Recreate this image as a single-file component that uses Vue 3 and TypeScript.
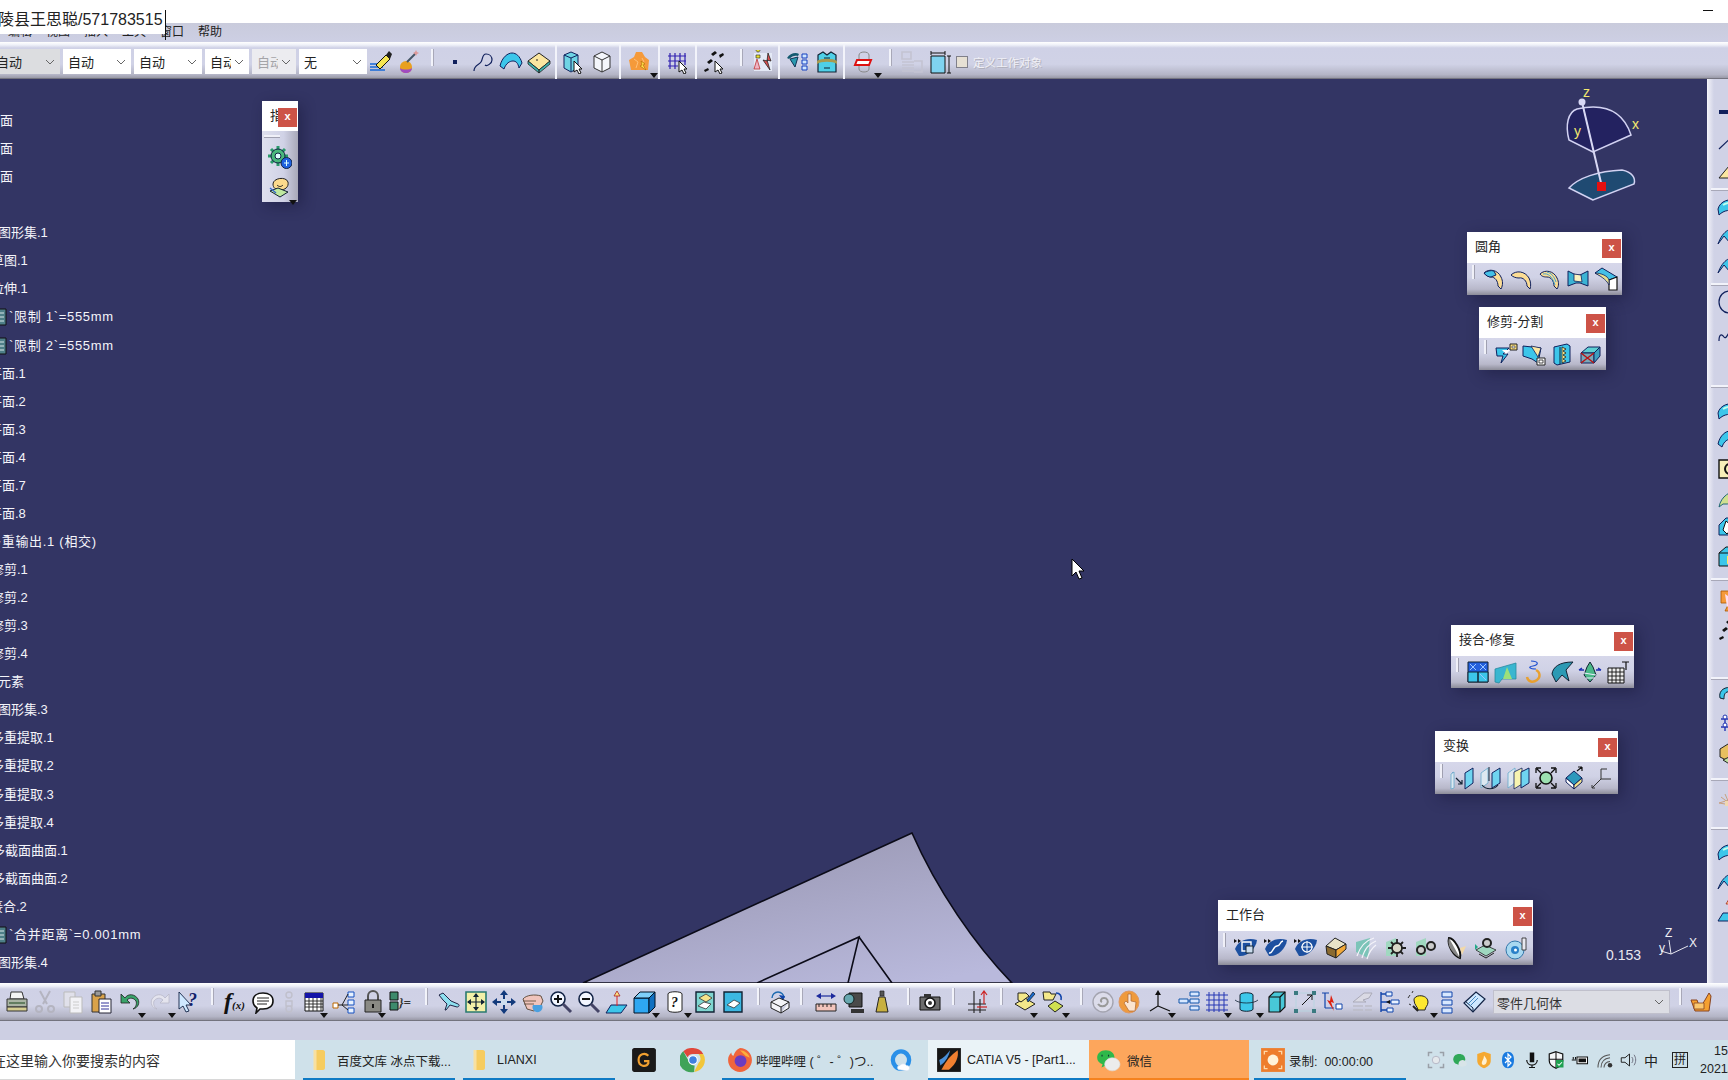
<template>
  <div class="page">
    <div class="titlebar">
      <span class="minimize"></span>
    </div>
    <div class="menu">
      <span v-for="m in menus" :key="m">{{ m }}</span>
    </div>
    <div class="toolbar top-tools">
      <div v-for="(c, i) in combos" :key="i" class="combo" :class="c.cls">
        <span class="combo-text">{{ c.text }}</span>
        <svg class="chev" width="10" height="6" viewBox="0 0 10 6"><path d="M1 1l4 4 4-4" fill="none" stroke="#666" /></svg>
      </div>
      <template v-for="(t, i) in topTools" :key="i">
        <div v-if="t.sep" class="sep" :class="{ tall: t.tall }" :style="{ width: t.sep + 'px' }"></div>
        <div v-else class="tool" :style="{ width: t.w + 'px' }">
          <Ico :n="t.n" />
          <i v-if="t.arrow" class="arrow"></i>
        </div>
      </template>
      <span class="check"></span>
      <span class="disabled-label">定义工作对象</span>
    </div>

    <div class="main">
      <div class="viewport">
        <svg class="scene" width="1707" height="904" viewBox="0 79 1707 904">
          <defs>
            <linearGradient id="partFill" x1="0.2" y1="0" x2="0.8" y2="1">
              <stop offset="0" stop-color="#9795b0" />
              <stop offset="1" stop-color="#b9b9dc" />
            </linearGradient>
          </defs>
          <path d="M912 833L583 983H1012C975 945 937 890 912 833z" fill="url(#partFill)" stroke="#0b0b18" stroke-width="1.6" />
          <path d="M757 983L859 937L848 983M859 937L892 983" fill="none" stroke="#0b0b18" stroke-width="1.6" />
          <!-- compass -->
          <path d="M1593 152L1569 140C1565 125 1568 112 1577 109C1600 104 1622 108 1631 135z" fill="#232260" stroke="#d2d2f2" stroke-width="1.5" />
          <path d="M1593 200L1569 188C1578 178 1598 171 1622 170C1632 172 1636 178 1634 184z" fill="#1f4a72" stroke="#d2d2f2" stroke-width="1.5" />
          <path d="M1582 102L1602 187" stroke="#d8d8f4" stroke-width="2" />
          <circle cx="1582" cy="102" r="3.5" fill="#d8d8f4" />
          <rect x="1597" y="182" width="9" height="9" fill="#e51010" />
          <text x="1583" y="97" class="axis-label">z</text>
          <text x="1632" y="129" class="axis-label">x</text>
          <text x="1574" y="136" class="axis-label">y</text>
          <!-- small axis -->
          <path d="M1671 954L1669 940M1671 954L1661 951M1671 954L1688 946" fill="none" stroke="#e8e8f0" stroke-width="1" />
          <text x="1665" y="937" class="mini-axis">Z</text>
          <text x="1689" y="947" class="mini-axis">X</text>
          <text x="1659" y="952" class="mini-axis">y</text>
          <text x="1606" y="960" class="scale">0.153</text>
          <!-- cursor -->
          <path d="M1072 559V576L1076 572L1079 579L1082 578L1079 571H1084z" fill="#fff" stroke="#000" stroke-width="1" />
        </svg>

        <div class="tree">
          <div v-for="(r, i) in treeRows" :key="i" class="row" :class="{ spaced: r.icon || r.wide }" :style="{ marginLeft: r.x + 'px' }">
            <svg v-if="r.icon" class="param" width="11" height="20" viewBox="0 0 11 20">
              <path d="M1 2h9v16H1z" fill="#4e7f88" stroke="#111" />
              <path d="M3 6h5M3 10h5M3 14h5" stroke="#d8e8e8" />
            </svg>
            {{ r.text }}
          </div>
        </div>

        <div class="palette narrow">
          <div class="pal-title"><span>指</span><b class="close">x</b></div>
          <div class="pal-col">
            <span class="grip-h"></span>
            <div class="tool"><Ico n="gearblue" /></div>
            <div class="tool"><Ico n="sketchface" /><i class="arrow"></i></div>
          </div>
        </div>

        <div
          v-for="p in palettes"
          :key="p.title"
          class="palette"
          :style="{ left: p.x + 'px', top: p.y + 'px', width: p.w + 'px' }"
        >
          <div class="pal-title"><span>{{ p.title }}</span><b class="close">x</b></div>
          <div class="pal-body" :class="{ wide: p.wide }">
            <span class="grip"></span>
            <div v-for="n in p.icons" :key="n" class="tool"><Ico :n="n" /></div>
          </div>
        </div>
      </div>

      <div class="rightbar">
        <template v-for="(r, i) in rightTools" :key="i">
          <div v-if="r.sep" class="rsep" :style="{ height: r.sep + 'px' }"></div>
          <div v-else class="rtool"><Ico v-if="r.n" :n="r.n" /></div>
        </template>
      </div>
    </div>

    <div class="toolbar bottom-tools">
      <template v-for="(t, i) in bottomTools" :key="i">
        <div v-if="t.sep" class="sep" :style="{ width: t.sep + 'px' }"></div>
        <div v-else class="tool" :style="{ width: t.w + 'px' }">
          <Ico :n="t.n" />
          <i v-if="t.arrow" class="arrow"></i>
        </div>
      </template>
      <div class="combo body-combo">
        <span class="combo-text">零件几何体</span>
        <svg class="chev" width="10" height="6" viewBox="0 0 10 6"><path d="M1 1l4 4 4-4" fill="none" stroke="#666" /></svg>
      </div>
      <div class="sep" style="width: 20px"></div>
      <div class="tool" style="width: 22px"><Ico n="hammer" /></div>
    </div>
    <div class="strip"></div>

    <div class="taskbar">
      <div class="search">在这里输入你要搜索的内容</div>
      <div class="task open first"><Ico n="folder" /><span>百度文库 冰点下载...</span></div>
      <div class="task open narrow-gap"><Ico n="folder" /><span>LIANXI</span></div>
      <div class="slot lead"><Ico n="gapp" :s="26" /></div>
      <div class="slot"><Ico n="chrome" :s="26" /></div>
      <div class="task open ff"><Ico n="firefox" :s="26" /><span>哔哩哔哩 ( ゜- ゜)つ...</span></div>
      <div class="slot"><Ico n="qqb" :s="26" /></div>
      <div class="task open catia"><Ico n="catia" :s="26" /><span>CATIA V5 - [Part1...</span></div>
      <div class="task wechat"><Ico n="wechat" :s="26" /><span>微信</span></div>
      <div class="task open rec"><Ico n="rec" :s="26" /><span>录制: &nbsp;00:00:00</span></div>
      <div class="tray">
        <div v-for="n in trayIcons" :key="n" class="tray-slot"><Ico :n="n" :s="18" /></div>
        <span class="ime">中</span>
        <span class="ime-box">拼</span>
        <div class="clock"><span>15:24</span><span>2021/8/9</span></div>
      </div>
    </div>

    <div class="note">
      <span>陵县王思聪/571783515</span>
      <i class="caret"></i>
    </div>
  </div>
</template>

<script setup lang="ts">
import { h } from 'vue'

type Shape = { d?: string; t?: string; x?: number; y?: number; s?: number; f: string; k?: string; w?: number }
type Tool = { n?: string; w?: number; arrow?: boolean; sep?: number; tall?: boolean }

const p = (d: string, f: string, k?: string, w?: number): Shape => ({ d, f, k, w })
const t = (text: string, x: number, y: number, s: number, f: string): Shape => ({ t: text, x, y, s, f })

const CUR = [p('M13 11v11l3-2 2 4 2-1-2-4h3z', '#fff', '#111', 1)]
const CY = '#3cc6ea'
const YE = '#fbe6a0'
const NV = '#10205c'

const icons: Record<string, Shape[]> = {
  brush: [p('M1 14h11M1 17h13M1 20h15', 'none', '#1668d8', 1.4), p('M7 15L17 5l4 4-10 10z', '#f5e553', '#111', 1), p('M17 5l3-4 3 3-2 5z', '#222')],
  ball: [p('M3 17a6 6 0 0 1 12 0c0 4-3 6-6 6s-6-2-6-6z', '#e8a020'), p('M3 18c2 2 10 2 12 0 0 3-3 5-6 5s-6-2-6-5z', '#a04cc0'), p('M10 12L19 3', 'none', '#456', 2), p('M19 0l1 2 2 1-2 1-1 2-1-2-2-1 2-1z', '#d99')],
  point: [p('M10 10h4v4h-4z', NV)],
  curve: [p('M3 21c0-6 5-6 7-9s1-8 5-8 6 3 6 6-5 7-7 5', 'none', NV, 1.2)],
  surf: [p('M1 16C3 7 9 3 13 3s8 3 10 10l-3 5c-1-5-3-7-6-7s-7 2-9 8z', CY, NV, 1)],
  dia: [p('M1 11l11-8 11 8-11 9z', YE, '#222', 1), p('M1 11l11 9v3L1 14zM23 11l-11 9v3l11-9z', '#3eb5b0', '#222', .8), p('M9 10h2', 'none', '#222')],
  sel1: [p('M3 5l7-3 7 3v13l-7 4-7-4z', '#6fd4e4', NV, 1), p('M10 8v13M3 5l7 3 7-3', 'none', NV), ...CUR],
  sel2: [p('M4 6l8-4 8 4v12l-8 4-8-4z', '#f4f6fb', '#333', 1), p('M12 10v12M4 6l8 4 8-4', 'none', '#333')],
  orange: [p('M8 2h6l3 5 4 3-1 10H3L1 10l5-3z', '#f59a3a'), p('M6 9l4 3-2 6M14 8l2 4', 'none', '#ffc078'), p('M13 11l4 3-2 1 3 5-6-4 2-1z', '#ffe14d', '#a60', .6)],
  gridsel: [p('M4 3v16M9 3v16M14 3v16M19 3v12M2 6h18M2 11h18M2 16h10', 'none', '#3020b0', 1.2), ...CUR],
  pts: [p('M9 4l4-3 2 2-4 3zM17 5l4-2 1 2-4 3zM5 12l4-3 2 2-4 3zM2 20l4-2 1 2-4 2z', '#111'), ...CUR],
  pair: [p('M3 3h18v18H3z', '#e4e9f6'), p('M7 2a2 2 0 1 1 .1 0zM5 5h4v3H5z', '#e8e030', '#222', .6), p('M6 9l3 10-6 0z', '#f0b4c4', '#b33', .8), p('M17 3l3 8-4-1 3 10-7-10 4 1z', '#e05050', '#222', .8)],
  eyetree: [p('M1 8c3-5 9-6 12-4l-1 2c-3-1-6 0-9 3z', '#145a70'), p('M4 9l8-2-3 10z', '#2a9ab0', '#135', 1), p('M16 4h5v4h-5zM16 10h5v4h-5zM16 16h5v4h-5z', '#cfe6ff', '#1540c0', 1)],
  wave: [p('M3 5l5-3 4 3 4-3 5 3v17H3z', '#4fd0e8', '#123', 1.2), p('M2 11c4-3 16-3 20 0v3c-4-3-16-3-20 0z', '#a89a50'), p('M9 8h6M9 18h6', 'none', '#123')],
  plane3: [p('M7 5c0-4 10-4 10 0v14c0 4-10 4-10 0z', 'none', '#888', 1), p('M5 10h14l-2 5H3z', '#fff', '#d11', 2)],
  gridbar: [p('M2 2h9v7H2zM2 12h12M2 15h12M2 18h12M2 21h12M14 11h8v11h-8', 'none', '#c4c4d2', 1.6)],
  boxdim: [p('M3 6h14v17H3z', '#7fd3f0', '#111', 1), p('M3 1v4M17 1v4M3 3h14', 'none', '#111'), p('M21 6v17M19 6h4M19 23h4', 'none', '#111')],

  print: [p('M6 2h11l2 7H5z', '#f4f4f4', '#333', 1), p('M2 9h20v8H2z', '#aab4a4', '#333', 1), p('M2 17h20v4H2z', '#d4cc90', '#333', 1), p('M4 13h16', 'none', '#464', 1.4)],
  cut: [p('M7 1l7 13M17 1L10 14', 'none', '#b4b4c0', 2), p('M3 19a3 3 0 1 0 6 0 3 3 0 1 0-6 0zM15 19a3 3 0 1 0 6 0 3 3 0 1 0-6 0z', 'none', '#b4b4c0', 2)],
  copy: [p('M3 2h11v15H3z', '#e0e0ea', '#bbb', 1), p('M9 7h12v16H9z', '#f2f2f6', '#bbb', 1), p('M12 12h6M12 15h6M12 18h6', 'none', '#ccc')],
  paste: [p('M3 4h13v18H3z', '#d9a24a', '#333', 1), p('M6 1h6v5H6z', '#999', '#333', 1), p('M10 9h12v14H10z', '#fff', '#223', 1), p('M12 13h8M12 16h8M12 19h8', 'none', '#339')],
  undo: [p('M3 4v9h9l-3-3c3-3 7-2 9 1 1 3 0 6-3 8 5-1 7-6 5-10-3-5-10-6-13-1z', '#3aa36a', '#222', .8)],
  redo: [p('M21 4v9h-9l3-3c-3-3-7-2-9 1-1 3 0 6 3 8-5-1-7-6-5-10 3-5 10-6 13-1z', '#e4e4ee', '#b8b8c8', .8)],
  what: [p('M2 2v17l4-3 3 6 3-1-3-6h5z', '#cfe8ff', '#124', .9), t('?', 11, 16, 18, '#11206a')],
  fx: [t('f', 1, 19, 24, '#111'), t('(x)', 9, 19, 11, '#111')],
  bubble: [p('M12 3c6 0 10 3 10 8s-4 8-10 8h-3l-4 4 1-5c-3-2-4-4-4-7 0-5 4-8 10-8z', '#fff', '#111', 1.6), p('M6 8h12M6 11h12M6 14h10', 'none', '#222', 1)],
  fig: [p('M9 5a3 3 0 1 1 6 0 3 3 0 1 1-6 0zM9 11h6v5H9zM9 19a3 3 0 1 1 6 0 3 3 0 1 1-6 0z', 'none', '#c0c0cc', 1.4)],
  table: [p('M3 3h18v18H3z', '#fff', '#111', 1), p('M3 3h18v5H3z', '#1414a8'), p('M3 11h18M3 14h18M3 17h18M7 8v13M11 8v13M15 8v13M19 8v13', 'none', '#222', .9)],
  tree: [p('M1 13h5v5H1z', '#fff', '#b60', 1), p('M16 2h6v5h-6zM16 10h6v5h-6zM16 18h6v5h-6z', '#e8f2ff', '#1550c0', 1), p('M6 15h4M10 15l6-11M10 15h6M10 15l6 5', 'none', '#222', 1)],
  lock: [p('M7 10V6a5 5 0 0 1 10 0v4', 'none', '#555', 2), p('M4 10h16v12H4z', '#8a8a84', '#222', 1), p('M12 14v4', 'none', '#111', 2)],
  formula: [p('M2 2h8v8H2zM2 12h8v8H2z', '#3d8a6c', '#111', 1), t('}=', 11, 17, 13, '#333')],
  airplane: [p('M2 5l4-2 8 8 7 3c2 1 1 3-1 3l-7-2-4 5H8l2-6-4-4z', '#8fe0f0', '#113', .9)],
  fit: [p('M2 2h20v20H2z', '#f3f0a8', '#2a7a70', 1.6), p('M12 4v16M4 12h16', 'none', '#123', 1.2), p('M12 3l-3 4h6zM12 21l-3-4h6zM3 12l4-3v6zM21 12l-4-3v6z', '#123')],
  pan: [p('M12 3v18M3 12h18', 'none', '#123a7c', 2), p('M12 0l-4 5h8zM12 24l-4-5h8zM0 12l5-4v8zM24 12l-5-4v8z', '#123a7c'), p('M9 9h6v6H9z', '#cde')],
  rot: [p('M2 9c3-4 12-5 18-3l2 5-3 6-6 4-7-2z', '#f0c4bc', '#543', .9), p('M2 11h13M3 14h10', 'none', '#543', .8), p('M12 15a5 5 0 1 0 9 0z', '#4aa0e0')],
  zin: [p('M2 9a7 7 0 1 0 14 0 7 7 0 1 0-14 0z', '#f2f6ff', '#124', 1.6), p('M14 14l8 8', 'none', '#446', 3), p('M5 9h8M9 5v8', 'none', '#111', 2)],
  zout: [p('M2 9a7 7 0 1 0 14 0 7 7 0 1 0-14 0z', '#f2f6ff', '#124', 1.6), p('M14 14l8 8', 'none', '#446', 3), p('M5 9h8', 'none', '#111', 2)],
  normal: [p('M6 15h16l-6 8H1z', CY, NV, 1), p('M12 16V4', 'none', '#d22', 1), p('M12 1l-3 5h6z', '#fbe080', '#a22', .8)],
  cube: [p('M2 8h15v15H2z', '#2ea7f2', '#012', 1), p('M2 8l6-6h15l-6 6z', '#7fd0fa', '#012', 1), p('M17 8l6-6v15l-6 6z', '#1070c0', '#012', 1)],
  qcan: [p('M5 4c0-3 14-3 14 0v16c0 3-14 3-14 0z', '#fff', '#222', 1), t('?', 8, 17, 14, '#111')],
  bookA: [p('M3 2h18v20H3z', '#7fd6d0', '#123', 1.4), p('M6 8l7-4 6 4-6 4z', '#f5e48a', '#333', .8), p('M5 16l6-4 7 2-5 5z', '#fff', '#333', .8)],
  bookB: [p('M3 2h18v20H3z', '#3cb8e2', '#123', 1.4), p('M6 15l7-5 6 3-6 5z', '#fff', '#333', .8)],
  hand2: [p('M4 8a6 6 0 0 1 12 0', 'none', '#1c6ab0', 1.4), p('M11 5l6 1-2 5z', '#14a'), p('M3 12l8-4 10 4-8 5zM3 12v6l10 5v-6M21 12v6l-8 5', '#f4f4f8', '#222', 1)],
  ruler: [p('M2 14h20v7H2z', '#f2c4bc', '#222', 1), p('M5 14v3M9 14v3M13 14v3M17 14v3', 'none', '#222'), p('M5 6h14', 'none', '#1c2a9c', 1.2), p('M2 6l5-3v6zM22 6l-5-3v6z', '#1c2a9c')],
  inertia: [p('M7 3h13v14H7z', '#4a4a4a', '#111', 1), p('M2 9a5 5 0 1 0 10 0 5 5 0 1 0-10 0z', '#68a8b0', '#122', 1), p('M9 19h13v4H9z', '#333')],
  weight: [p('M9 7h6l3 15H6z', '#c8b040', '#222', 1), p('M10 1h4v5h-4z', '#555', '#222', .7)],
  camera: [p('M2 7h20v13H2z', '#6c6c6c', '#111', 1), p('M6 4h7v3H6z', '#333'), p('M7 13a5 5 0 1 0 10 0 5 5 0 1 0-10 0z', '#fff', '#111', 1.6), p('M10 13a2 2 0 1 0 4 0 2 2 0 1 0-4 0z', '#333')],
  hdim: [p('M9 1v22M15 9v14M3 14h18M3 20h18', 'none', '#222', 1.1), p('M19 2v12M16 5l3-4 3 4', 'none', '#c22', 1.2), p('M12 17h10', 'none', '#c22', 1.2)],
  fedit: [p('M2 14l10-6 10 6-10 6z', '#f4e88a', '#222', 1), p('M5 3h8l3 3-8 6-3-2z', '#f4e88a', '#222', 1), p('M14 10l6-8 2 2-7 8z', '#1a6acc', '#123', .8)],
  fswap: [p('M2 2h7l1 2h5l-3 6H3z', '#f4e88a', '#222', 1), p('M7 16l7-5 8 5-8 6z', '#d0e050', '#222', 1), p('M15 3c4 0 6 3 5 7', 'none', '#14a', 1.6)],
  spiral: [p('M2 12a10 10 0 1 0 20 0 10 10 0 1 0-20 0z', '#dcdcea', '#a4a4b0', 1.4), p('M7 14c2 3 7 3 9 0s0-6-3-6-4 3-2 4', 'none', '#999', 2)],
  handorange: [p('M2 12a10 11 0 1 0 20 0 10 11 0 1 0-20 0z', '#ef9a3c', '#d96', 1), p('M11 4v9l-2-2-2 2 5 8h6l1-9-5-1V4z', '#fbe4cf', '#a63', .7)],
  axes: [p('M10 3v13L2 21M10 16l12 5', 'none', '#111', 1.2), p('M10 0l-3 5h6z', '#111')],
  spec: [p('M13 2h9v4h-9zM2 9h9v4H2zM13 9h9v4h-9zM13 16h9v4h-9z', '#d8e8ff', '#15a', 1), p('M11 11h2', 'none', '#15a')],
  grid2: [p('M4 2v20M9 2v20M14 2v20M19 2v20M1 5h22M1 10h22M1 15h22M1 20h22', 'none', '#2536b4', 1)],
  prism: [p('M5 5c0-3 13-3 13 0v14c0 3-13 3-13 0z', '#3dc8ea', '#123', 1), p('M0 10c4 4 19 4 23 0', 'none', '#123', .8)],
  box3: [p('M4 7l5-5h11v15l-5 5H4z', '#48c8d8', '#111', 1.2), p('M4 7h11v15M15 7l5-5', 'none', '#111', 1.2)],
  bbox: [p('M3 3h18v18H3z', 'none', '#b8d4e0', 1), p('M1 1h4v4H1zM19 19h4v4h-4zM1 19h4v4H1zM19 1h4v4h-4z', '#3a7a80'), p('M9 15L19 5M14 5h5v5', 'none', '#111', 1)],
  nobolt: [p('M2 3h7M5 3v15M5 18h9', 'none', '#14a', 1.2), p('M16 14h6v5h-6z', '#fff', '#14a', 1), p('M11 5l3 8-3-1 3 9-7-11 3 1z', '#d21')],
  handgrey: [p('M3 12L14 3h8l-3 5-6 2 3 2H4z', '#dadae4', '#aaaab8', 1), p('M3 16h10M3 20h10M15 16h7M15 20h7', 'none', '#bcbcc8', 1.6)],
  treec: [p('M3 2v20M3 4h5M3 12h10M3 20h6', 'none', '#14a', 1.4), p('M8 2h6v4H8zM13 10h8v4h-8zM9 18h6v4H9z', '#e8f2ff', '#14a', 1), p('M8 12l4-2v4z', '#111')],
  bulb: [p('M7 10c0-6 14-6 14 2 0 4-3 5-3 8h-7c0-3-4-5-4-10z', '#fde830', '#222', 1), p('M1 8l2-3M5 3l1-2M2 14l2 1', 'none', '#333'), p('M6 16l5 5', 'none', '#222', 2)],
  stack: [p('M7 2h10v5H7zM7 10h10v5H7zM7 18h10v5H7z', '#d8e8ff', '#14a', 1)],
  solid: [p('M2 13L14 2l9 7-12 13z', '#cfe8ff', '#124', 1.2), p('M2 13l9 9v-4l-8-7', 'none', '#124', 1), p('M6 14l8-8M8 16l8-8', 'none', '#4a8ac0')],
  hammer: [p('M2 10h6l3 8 5-8 4-7 2 3-2 15H6z', '#f5a030', '#842', 1), p('M5 13h10v6H5z', '#fbc870', '#842', .8)],

  gearblue: [p('M10 0v20M0 10h20M3 3l14 14M17 3L3 17', 'none', '#2a9a6a', 3), p('M3 10a7 7 0 1 0 14 0 7 7 0 1 0-14 0z', '#49b87c', '#124', 1), p('M7 10a3 3 0 1 0 6 0 3 3 0 1 0-6 0z', '#dff', '#124'), p('M13 17a5.500 5.500 0 1 0 11 0 5.500 5.500 0 1 0-11 0z', '#1f62e0', '#124'), p('M16 17h5M18.500 14v6', 'none', '#dff')],
  sketchface: [p('M5 10c0-6 13-8 15-2 1 5-3 8-8 8-4 0-7-2-7-6z', '#fbd98c', '#222', 1), p('M9 11c2 2 4 2 6 0', 'none', '#222'), p('M2 17l8-3 10 4-8 5z', '#bfe8a0', '#123', 1), p('M2 14l6 5', 'none', '#36c', 1.4)],

  fil1: [p('M2 6c5-5 14-3 17 4 2 4 2 8 0 12l-3-3c0-5-3-9-7-9-2 0-5-1-7-4z', '#fbdc94', NV, 1), p('M2 6c3-2 7-3 10-2l2 4-5 2c-2 0-5-1-7-4z', '#44c0e6', NV, 1)],
  fil2: [p('M1 8c5-5 14-4 18 3 2 4 2 8 1 11l-3-3c0-5-4-9-8-8-3 0-6-1-8-3z', '#fbdc94', NV, 1)],
  fil3: [p('M2 7c5-5 14-3 17 4 2 4 2 8 0 11l-3-3c0-5-3-9-7-9-2 0-5 0-7-3z', '#fbdc94', NV, 1), p('M5 7c5-1 9 2 12 11M9 5c4 1 7 4 9 10', 'none', '#44a4d0', 1)],
  fil4: [p('M2 4l8 4h4l8-4v15l-8-3h-4l-8 3z', '#3cb4d4', NV, 1), p('M8 7l7 1 1 7-8-1z', '#fbf2c0', NV, .8)],
  fil5: [p('M1 6l7-5 15 9-8 3z', '#44c0e6', NV, 1), p('M15 13l8-3v13h-8z', '#fff', '#111', 1.2), p('M1 6c6 0 13 3 14 7v5C12 12 6 9 1 6z', '#e8e090', NV, .8)],
  trim1: [p('M2 6h13l-6 6 5 0-7 9 2-7H3z', CY, NV, 1), p('M8 8h8l-4 4z', '#fff'), p('M16 2h7v6h-7z', '#fbe080', '#222', 1), p('M18 4h3v2h-3z', '#fff', '#222', .6)],
  trim2: [p('M1 4l18 2-3 15-6-4-9-3z', CY, NV, 1), p('M9 4l10 2-3 9z', YE, NV, .8), p('M15 16h8v7h-8z', '#fff', '#222', 1), p('M17 18h4v3h-4z', '#fff', '#222', .8)],
  trim3: [p('M4 5l13-3 3 2v16l-13 3-3-2z', CY, NV, 1), p('M10 5v17', 'none', '#123'), p('M12 5l4 2-3 2 3 2-3 2 3 2-3 2 3 2-4 2z', '#f5e48a', '#222', .8)],
  trim4: [p('M3 11l7-6h12l-6 6z', '#5ed0d4', NV, 1), p('M3 11h13v10H3z', '#7aa8b8', NV, 1), p('M16 11l6-6v9l-6 7z', '#3ca0c0', NV, 1), p('M3 11l13 10M16 11L3 21', 'none', '#b11', 1.4)],
  heal1: [p('M2 2h20v20H2z', '#2360dc', '#123', 1), p('M12 12h10v10H12zM2 12h10v10H2z', CY, '#123', 1), p('M4 4l6 6M10 4l-6 6M14 4l6 6M20 4l-6 6M14 14l6 6', 'none', '#9cc8ff', 1)],
  heal2: [p('M1 9l21-6v16H8l-3 4-4-1z', '#3ab6d0', '#2a8aa0', .8), p('M9 19l4-12 5 12z', '#9ce07a')],
  heal3: [p('M9 1c8 0 8 4 2 5s-3 3 3 3', 'none', '#2050d0', 1.2), p('M14 10c4 2 5 7 1 10s-9 2-10-3', 'none', '#e8a030', 2.4)],
  heal4: [p('M2 14C3 7 9 2 23 2l-7 8 3 11-7-6-6 7z', '#2c9ab4', '#123', 1)],
  heal5: [p('M9 7l3-5 3 5 3 8-6 7-6-7z', '#4ab888', '#123', 1), p('M1 10h5M23 10h-5M1 10l3-2M23 10l-3-2', 'none', '#1a2cb0', 1.4), p('M6 13l12 2M8 18l9 0', 'none', '#eef')],
  heal6: [p('M2 8h16v15H2z', '#eee', '#111', 1), p('M6 8v15M10 8v15M14 8v15M2 12h16M2 16h16M2 20h16', 'none', '#111', .9), p('M16 2h7M20 2v8', 'none', '#111', 1.2)],
  trans1: [p('M3 6v14', 'none', '#26a', 1), p('M1 8l3-2v16l-3 1z', '#dde8f0', '#6ac', .8), p('M15 7l8-5v15l-8 6z', '#6fd4f0', NV, 1), p('M6 12l6 6M12 14v4H8', 'none', '#123', 1.2)],
  trans2: [p('M3 7l7-5v15l-7 5z', '#dde8f0', '#6ac', .8), p('M14 7l8-5v15l-8 5z', '#6fd4f0', NV, 1), p('M11 1v14', 'none', '#123', 1), p('M4 19c4 5 12 5 16 0', 'none', '#123', 1.2)],
  trans3: [p('M2 7l7-5v15l-7 5z', '#dde8f0', '#6ac', .8), p('M8 6l8-4v16l-8 5z', '#f7f4b0', NV, .8), p('M15 6l8-4v15l-8 5z', '#6fd4f0', NV, 1)],
  trans4: [p('M6 12a6 6 0 1 0 12 0 6 6 0 1 0-12 0z', '#9ce0b0', '#111', 1.6), p('M2 2h5M2 2v5M22 2h-5M22 2v5M2 22h5M2 22v-5M22 22h-5M22 22v-5M3 3l4 4M21 3l-4 4M3 21l4-4M21 21l-4-4', 'none', '#111', 1.3)],
  trans5: [p('M4 12l8-7 8 7-8 7z', '#2c98bc', NV, 1), p('M4 12l8 7v4l-8-7z', '#fff', NV, 1), p('M20 12l-8 7v4l8-7z', '#f5e48a', NV, 1), p('M15 5l5-4M20 1v4M20 1h-4', 'none', '#111', 1.2)],
  trans6: [p('M11 13L2 22M11 13h10M11 13V3M2 22v-3M2 22h3', 'none', '#333', 1), p('M11 3h6', 'none', '#333', 1)],
  work1: [p('M1 13C4 5 13 1 23 4c-1 9-10 17-18 16z', '#1d50a0'), p('M8 6h9v9H8z', 'none', '#fff', 1.4), p('M12 10h7v7h-7z', '#cde', '#123', 1), p('M0 3l3 2-3 2zM4 3l3 2-3 2z', '#111')],
  work2: [p('M1 13C4 5 13 1 23 4c-1 9-10 17-18 16z', '#1d50a0'), p('M5 17c4 1 4-7 8-7s2-4 6-5', 'none', '#fff', 1.4), p('M0 3l3 2-3 2zM4 3l3 2-3 2z', '#111')],
  work3: [p('M1 13C4 5 13 1 23 4c-1 9-10 17-18 16z', '#1d50a0'), p('M8 11a5 5 0 1 0 10 0 5 5 0 1 0-10 0z', 'none', '#fff', 1.2), p('M13 5v12M7 11h12', 'none', '#fff', 1), p('M0 3l3 2-3 2zM4 3l3 2-3 2z', '#111')],
  work4: [p('M2 10l9-8 11 6-10 6z', '#e8e4c8', '#222', 1), p('M2 10l10 4v8L3 18z', '#8a6a30', '#222', 1), p('M12 14l10-6v5l-10 9z', '#f2a838', '#222', 1)],
  work5: [p('M2 6l14-4-2 20-12-6z', '#7cc4b8'), p('M3 20C7 8 13 4 20 2M8 22C11 12 15 8 22 5M13 23c2-7 5-11 9-14', 'none', '#f4f4fa', 1.2)],
  work6: [p('M2 6l10-4v18L2 20z', '#a0d8c0'), p('M8 12a5 5 0 1 0 10 0 5 5 0 1 0-10 0z', '#d8d8c8', '#222', 1.8), p('M13 3v4M13 17v4M4 12h4M18 12h4M7 6l3 3M19 6l-3 3M7 18l3-3M19 18l-3-3', 'none', '#222', 1.8)],
  work7: [p('M2 6l10-4v18L2 20z', '#a0d8c0'), p('M3 14a4 4 0 1 0 8 0 4 4 0 1 0-8 0zM13 10a4 4 0 1 0 8 0 4 4 0 1 0-8 0z', '#ccc', '#222', 2)],
  work8: [p('M5 2c5 0 13 13 11 20-6-2-13-12-11-20z', '#fff', '#111', 2), p('M5 2C3 8 6 16 16 22', '#888'), p('M16 12l6-2-4 9z', '#f3d9a8')],
  work9: [p('M1 8l3 3-3 3z', '#2a8'), p('M2 14l9-5 11 5-10 6z', '#a0d8c0', '#222', .8), p('M9 7a4 4 0 1 0 8 0 4 4 0 1 0-8 0z', '#ccc', '#222', 2), p('M5 18l7 4 8-5', 'none', '#222', 1)],
  work10: [p('M2 14a9 9 0 1 0 18 0 9 9 0 1 0-18 0z', '#a8d8f0', '#37a', 1), p('M7 14a4 4 0 1 0 8 0 4 4 0 1 0-8 0z', '#2a80c8'), p('M18 2h4v12h-4z', '#e8e8f0', '#222', .8), p('M10 14a1.500 1.500 0 1 0 3 0 1.500 1.500 0 1 0-3 0z', '#fff')],

  dash: [p('M2 10h20v4H2z', NV)],
  line: [p('M2 20L20 3', 'none', NV, 1.2)],
  tri: [p('M2 20L12 8h12v12z', YE, '#222', 1)],
  wing: [p('M1 14C3 6 12 3 23 5v12C13 14 7 15 2 20z', CY, NV, 1), p('M6 10c5-3 11-3 17-2', 'none', '#bfe', 2)],
  shell: [p('M1 20C6 6 14 3 24 4v8l-6-3-5 10-6-7z', CY, NV, 1)],
  ring: [p('M2 12a10 11 0 1 0 20 0 10 11 0 1 0-20 0z', 'none', NV, 1.2)],
  curl: [p('M2 22c0-6 2-8 5-4s5-10 12-10 7 6 5 9', 'none', NV, 1.2)],
  sq: [p('M2 3h22v18H2z', '#f6eeb8', '#111', 1.4), p('M8 12a5 5 0 1 0 10 0 5 5 0 1 0-10 0z', 'none', '#111', 2)],
  leaf: [p('M2 21C4 10 13 5 24 3c0 9-6 16-18 15z', '#cfe090', '#267', 1)],
  boxc: [p('M2 10l7-7h15v17H2z', CY, NV, 1), p('M9 6l7 6-6 7-4-4z', '#fff', '#111', 1)],
  boxy: [p('M2 9l7-6h15v19H2z', CY, '#111', 1), p('M2 9h12v13M14 9l6-6', 'none', '#111', 1), p('M10 12l10-3v8l-10 3z', '#fde860')],
  arrowO: [p('M4 2h8l12 10-12 10H8l4-8H4z', '#f59a3a', '#a50', .8), p('M8 5l10 7-8 6z', '#fde')],
  hook: [p('M3 14C1 6 9 2 15 4c6 2 9 6 9 9h-5c-2-4-5-6-9-5-3 1-3 5-3 7z', CY, '#123', 1), p('M15 20l5 4M20 20l-5 4', 'none', '#333', 1)],
  gnodes: [p('M4 6h20M4 14h20M8 2v16M16 2v16', 'none', '#2536b4', 1.4), p('M6 4a2 2 0 1 0 4 0 2 2 0 1 0-4 0zM14 4a2 2 0 1 0 4 0 2 2 0 1 0-4 0zM6 12a2 2 0 1 0 4 0 2 2 0 1 0-4 0zM14 12a2 2 0 1 0 4 0 2 2 0 1 0-4 0z', '#fff', '#2536b4', 1)],
  tag: [p('M3 7l8-5 8 5v8l-8 4-8-4z', '#e8c060', '#222', 1), p('M6 18l8-4 8 4-8 5z', '#bfe0a0', '#222', 1)],
  spark: [p('M2 12l20-6M2 12l18 3M4 6l16 12M8 3l8 18', 'none', '#c8a080', 1), p('M8 10h10v5H8z', '#f0d8b0')],

  folder: [p('M8 2h8c1 0 2 1 2 2v16c0 1-1 2-2 2H8z', '#f6cc60'), p('M8 2v20', 'none', '#f8e0a0', 3)],
  gapp: [p('M3 1h18c1 0 2 1 2 2v18c0 1-1 2-2 2H3c-1 0-2-1-2-2V3c0-1 1-2 2-2z', '#1a1a1a'), p('M16 8c-3-3-9-2-9 4s7 7 9 3v-2h-4', 'none', '#f0a030', 2)],
  chrome: [p('M12 1a11 11 0 0 1 9.500 5.500H12a5.500 5.500 0 0 0-5 3L3 4a11 11 0 0 1 9-3z', '#e0483a'), p('M21.500 6.500A11 11 0 0 1 13 23l4-8a5.500 5.500 0 0 0 0-8.500z', '#f2c63a'), p('M13 23A11 11 0 0 1 3 4l4.500 8a5.500 5.500 0 0 0 6 5z', '#3fa358'), p('M8 12a4 4 0 1 0 8 0 4 4 0 1 0-8 0z', '#3f7fe0', '#fff', 1)],
  firefox: [p('M12 1c6 0 11 5 11 11s-5 11-11 11S1 18 1 12c0-3 1-5 3-7 0 2 1 3 2 3 1-3 3-6 6-7z', '#f0653c'), p('M7 13a5.500 5.500 0 1 0 11 0 5.500 5.500 0 1 0-11 0z', '#6c3cc0'), p('M12 3c4 0 8 3 9 7l-4-2-3-3z', '#fbb03c')],
  qqb: [p('M12 2a9.500 10 0 1 0 0 20 9.500 10 0 1 0 0-20zm0 4a5.500 6 0 1 1 0 12 5.500 6 0 1 1 0-12z', '#2a90e8'), p('M11 21c-3 0-3-4 0-4 1-2 5-2 6 0 4 0 4 5 0 5z', '#fff', '#cde', .6)],
  catia: [p('M1 1h22v22H1z', '#161616'), p('M5 21C9 13 14 7 20 3c1 6-1 12-8 18z', '#f08030'), p('M3 12c4-2 7-5 10-9-1 5-4 11-9 14z', '#4a90d8')],
  wechat: [p('M10 3c5 0 8 3 8 7s-3 7-8 7l-4 2 1-3c-3-1-5-3-5-6 0-4 3-7 8-7z', '#2fb84a'), p('M16 10c4 0 7 3 7 6s-3 6-7 6-7-3-7-6 3-6 7-6z', '#ececec', '#ddd', .6), p('M6 8h1M12 8h1', 'none', '#133', 1.6)],
  rec: [p('M1 1h22v22H1z', '#ee7d2c'), p('M7 12a5 5 0 1 0 10 0 5 5 0 1 0-10 0z', '#fff2d8'), p('M4 7V4h3M20 7V4h-3M4 17v3h3M20 17v3h-3', 'none', '#ffd8a8', 1.2)],
  focus: [p('M2 7V2h5M22 7V2h-5M2 17v5h5M22 17v5h-5', 'none', '#9aa0a8', 2), p('M7 12a5 5 0 1 0 10 0 5 5 0 1 0-10 0z', '#e4e8ec', '#aab', 1)],
  wc: [p('M11 4c5 0 8 3 8 7s-3 7-8 7-8-3-8-7 3-7 8-7z', '#2fa858'), p('M15 12c3 0 6 2 6 5s-3 4-6 4-5-2-5-4 2-5 5-5z', '#d8e4e8')],
  shieldo: [p('M12 1l9 3v9c0 5-4 8-9 10-5-2-9-5-9-10V4z', '#f5a830'), p('M12 6c3 4 5 6 3 10s-6 3-6 0 3-5 3-10z', '#fff0d0')],
  bt: [p('M12 1c5 0 8 4 8 11s-3 11-8 11-8-4-8-11 3-11 8-11z', '#1a7ae0'), p('M8 8l8 8-4 4V4l4 4-8 8', 'none', '#fff', 1.6)],
  mic: [p('M9 2h6v13H9z', '#111'), p('M5 12c0 9 14 9 14 0M12 18v4M8 22h8', 'none', '#111', 1.6)],
  defender: [p('M12 1l9 3v9c0 5-4 8-9 10-5-2-9-5-9-10V4z', '#f4f6f8', '#111', 1.6), p('M12 1v22M3 11h18', 'none', '#111', 1.4), p('M12 12h10v10H12z', '#1ea050'), p('M14 17l2 2 4-4', 'none', '#fff', 1.4)],
  batt: [p('M8 8h14v9H8z', '#fff', '#111', 1.4), p('M10 10h10v5H10z', '#111'), p('M1 12h6M3 8v3M6 8v3', 'none', '#111', 1.4)],
  wifi: [p('M4 22C4 12 10 6 20 5M8 22c0-7 4-12 12-13M12 22c0-4 3-8 8-8', 'none', '#555', 1.4), p('M17 19a3 3 0 1 0 6 0 3 3 0 1 0-6 0z', '#333')],
  vol: [p('M3 9h5l6-5v16l-6-5H3z', 'none', '#222', 1.3), p('M17 8c2 2 2 6 0 8M20 5c3 4 3 10 0 14', 'none', '#667', 1.2)],
}

const Ico = (props: { n: string; s?: number }) => {
  const size = props.s ?? 24
  const shapes = icons[props.n] ?? []
  return h(
    'svg',
    { width: size, height: size, viewBox: '0 0 24 24', class: 'ico' },
    shapes.map((s) =>
      s.d
        ? h('path', { d: s.d, fill: s.f, stroke: s.k ?? 'none', 'stroke-width': s.w ?? 1 })
        : h('text', { x: s.x, y: s.y, 'font-size': s.s, fill: s.f, 'font-weight': 700, 'font-style': 'italic', 'font-family': '"Liberation Serif", serif' }, s.t),
    ),
  )
}
Ico.props = ['n', 's']

const menus = ['编辑', '视图', '插入', '工具', '窗口', '帮助']

const combos = [
  { text: '自动', cls: 'c-grey c-first' },
  { text: '自动', cls: 'c-wide' },
  { text: '自动', cls: 'c-wide' },
  { text: '自动', cls: 'c-small' },
  { text: '自动', cls: 'c-small c-dim' },
  { text: '无', cls: 'c-wide' },
]

const topTools: Tool[] = [
  { n: 'brush', w: 28 }, { n: 'ball', w: 28 }, { sep: 18 },
  { n: 'point', w: 28 }, { n: 'curve', w: 28 }, { n: 'surf', w: 28 }, { n: 'dia', w: 28 }, { sep: 6, tall: true },
  { n: 'sel1', w: 28 }, { n: 'sel2', w: 30 }, { sep: 6, tall: true },
  { n: 'orange', w: 34, arrow: true }, { sep: 4, tall: true },
  { n: 'gridsel', w: 34 }, { sep: 2, tall: true },
  { n: 'pts', w: 34 }, { sep: 20 },
  { n: 'pair', w: 24 }, { sep: 8, tall: true },
  { n: 'eyetree', w: 30 }, { n: 'wave', w: 28 }, { sep: 6, tall: true },
  { n: 'plane3', w: 34, arrow: true }, { sep: 18 },
  { n: 'gridbar', w: 26 }, { n: 'boxdim', w: 30 },
]

const bottomTools: Tool[] = [
  { n: 'print', w: 28 }, { n: 'cut', w: 28 }, { n: 'copy', w: 28 }, { n: 'paste', w: 28 },
  { n: 'undo', w: 30, arrow: true }, { n: 'redo', w: 30, arrow: true }, { n: 'what', w: 28 }, { sep: 18 },
  { n: 'fx', w: 28 }, { n: 'bubble', w: 28 }, { n: 'fig', w: 24 }, { n: 'table', w: 26, arrow: true },
  { n: 'tree', w: 34 }, { n: 'lock', w: 24, arrow: true }, { n: 'formula', w: 30 }, { sep: 22 },
  { n: 'airplane', w: 24 }, { n: 'fit', w: 30 }, { n: 'pan', w: 26 }, { n: 'rot', w: 32 }, { n: 'zin', w: 24 }, { n: 'zout', w: 32 },
  { n: 'normal', w: 24 }, { n: 'cube', w: 30, arrow: true }, { n: 'qcan', w: 32, arrow: true }, { n: 'bookA', w: 28 }, { n: 'bookB', w: 28 }, { sep: 22 },
  { n: 'hand2', w: 22 }, { sep: 20 },
  { n: 'ruler', w: 30 }, { n: 'inertia', w: 26 }, { n: 'weight', w: 30 }, { sep: 22 },
  { n: 'camera', w: 22 }, { sep: 24 },
  { n: 'hdim', w: 24 }, { sep: 24 },
  { n: 'fedit', w: 24, arrow: true }, { n: 'fswap', w: 32, arrow: true }, { sep: 24 },
  { n: 'spiral', w: 20 }, { n: 'handorange', w: 32 }, { n: 'axes', w: 30, arrow: true }, { n: 'spec', w: 28 },
  { n: 'grid2', w: 28, arrow: true }, { n: 'prism', w: 32, arrow: true }, { n: 'box3', w: 28 }, { n: 'bbox', w: 28 },
  { n: 'nobolt', w: 26 }, { n: 'handgrey', w: 34 }, { n: 'treec', w: 22 }, { n: 'bulb', w: 36, arrow: true },
  { n: 'stack', w: 20 }, { n: 'solid', w: 33 },
]

const treeRows = [
  { text: '面', x: 0 }, { text: '面', x: 0 }, { text: '面', x: 0 }, { text: '', x: 0 },
  { text: '图形集.1', x: -2 }, { text: '草图.1', x: -9 }, { text: '拉伸.1', x: -9 },
  { text: '`限制 1`=555mm', x: 0, icon: true }, { text: '`限制 2`=555mm', x: 0, icon: true },
  { text: '平面.1', x: -11 }, { text: '平面.2', x: -11 }, { text: '平面.3', x: -11 }, { text: '平面.4', x: -11 },
  { text: '平面.7', x: -11 }, { text: '平面.8', x: -11 }, { text: '多重输出.1 (相交)', x: -12, wide: true },
  { text: '修剪.1', x: -9 }, { text: '修剪.2', x: -9 }, { text: '修剪.3', x: -9 }, { text: '修剪.4', x: -9 },
  { text: '元素', x: -2 }, { text: '图形集.3', x: -2 },
  { text: '多重提取.1', x: -9 }, { text: '多重提取.2', x: -9 }, { text: '多重提取.3', x: -9 }, { text: '多重提取.4', x: -9 },
  { text: '多截面曲面.1', x: -8 }, { text: '多截面曲面.2', x: -8 }, { text: '接合.2', x: -10 },
  { text: '`合并距离`=0.001mm', x: 0, icon: true }, { text: '图形集.4', x: -2 },
]

const palettes = [
  { title: '圆角', x: 1467, y: 153, w: 155, icons: ['fil1', 'fil2', 'fil3', 'fil4', 'fil5'] },
  { title: '修剪-分割', x: 1479, y: 228, w: 127, icons: ['trim1', 'trim2', 'trim3', 'trim4'] },
  { title: '接合-修复', x: 1451, y: 546, w: 183, icons: ['heal1', 'heal2', 'heal3', 'heal4', 'heal5', 'heal6'] },
  { title: '变换', x: 1435, y: 652, w: 183, icons: ['trans1', 'trans2', 'trans3', 'trans4', 'trans5', 'trans6'] },
  {
    title: '工作台', x: 1218, y: 821, w: 315, wide: true,
    icons: ['work1', 'work2', 'work3', 'work4', 'work5', 'work6', 'work7', 'work8', 'work9', 'work10'],
  },
]

const rightTools: Tool[] = [
  { n: 'dash' }, { n: 'line' }, { n: 'tri' }, { sep: 8 },
  { n: 'wing' }, { n: 'shell' }, { n: 'shell' }, { sep: 8 },
  { n: 'ring' }, { n: 'curl' }, {}, { sep: 22 },
  { n: 'wing' }, { n: 'surf' }, { n: 'sq' }, { n: 'leaf' }, { n: 'boxc' }, { n: 'boxy' }, { sep: 16 },
  { n: 'arrowO' }, { n: 'pts' }, {}, { sep: 8 },
  { n: 'hook' }, { n: 'gnodes' }, { n: 'tag' }, { sep: 20 },
  { n: 'spark' }, { sep: 20 },
  { n: 'wing' }, { n: 'shell' }, { n: 'normal' },
]

const trayIcons = ['focus', 'wc', 'shieldo', 'bt', 'mic', 'defender', 'batt', 'wifi', 'vol']
</script>

<style>
html,
body {
  margin: 0;
  overflow: hidden;
  background: #333564;
}
</style>

<style scoped>
.page {
  position: relative;
  width: 1728px;
  height: 1080px;
  display: flex;
  flex-direction: column;
  overflow: hidden;
  font-family: "Liberation Sans", "Noto Sans CJK SC", sans-serif;
  font-size: 13px;
  color: #222;
}

.titlebar {
  height: 23px;
  flex: none;
  background: #fff;
  position: relative;
}

.minimize {
  position: absolute;
  right: 15px;
  top: 10px;
  width: 10px;
  height: 1px;
  background: #111;
}

.menu {
  height: 19px;
  flex: none;
  padding-left: 8px;
  display: flex;
  gap: 14px;
  align-items: center;
  background: linear-gradient(#c9cbdc, #cdcfe4);
  font-size: 12px;
  line-height: 19px;
}

.menu span {
  width: 24px;
  white-space: nowrap;
}

.toolbar {
  display: flex;
  align-items: center;
  flex: none;
  background: linear-gradient(#ffffff 0, #eef0f8 8%, #cfd1e6 16%, #d0d2e6 60%, #b4b5c6 88%, #9a9aa8 97%, #55555e 100%);
}

.top-tools {
  height: 37px;
  padding-top: 2px;
  box-sizing: border-box;
}

.bottom-tools {
  height: 38px;
  padding-left: 3px;
  box-sizing: border-box;
}

.combo {
  flex: none;
  height: 25px;
  box-sizing: border-box;
  display: flex;
  align-items: center;
  justify-content: space-between;
  padding: 0 5px 0 5px;
  margin-right: 3px;
  background: #fff;
  font-size: 13px;
  overflow: hidden;
}

.combo-text {
  white-space: nowrap;
  overflow: hidden;
  min-width: 0;
}

.chev {
  flex: none;
  margin-left: 3px;
}

.c-wide {
  width: 68px;
}

.c-small {
  width: 44px;
}

.c-grey {
  width: 60px;
  background: #dcdde0;
  padding-left: 0;
}

.c-first .combo-text {
  margin-left: -4px;
}

.c-dim {
  background: #ececf0;
  color: #a4a4a8;
}

.c-small .combo-text {
  width: 21px;
}

.combo:nth-child(6) {
  margin-right: 0;
}

.body-combo {
  width: 177px;
  height: 24px;
  margin: 0 0 0 3px;
  padding-left: 3px;
  background: #dcdde4;
  border: 1px solid #c0c0cc;
  color: #333;
}

.tool {
  position: relative;
  flex: none;
  display: flex;
  align-items: center;
  justify-content: center;
  height: 26px;
}

.ico {
  flex: none;
  display: block;
}

.arrow {
  position: absolute;
  right: -1px;
  bottom: -3px;
  width: 0;
  height: 0;
  border-left: 4px solid transparent;
  border-right: 4px solid transparent;
  border-top: 5px solid #111;
}

.sep {
  position: relative;
  flex: none;
  align-self: stretch;
}

.sep::after {
  content: "";
  position: absolute;
  left: 50%;
  top: 5px;
  height: 17px;
  width: 2px;
  margin-left: -1px;
  background: #f2f3fa;
  box-shadow: 1px 0 0 #a8a8b8;
}

.sep.tall::after {
  top: 0;
  height: 100%;
  box-shadow: none;
}

.check {
  flex: none;
  width: 12px;
  height: 12px;
  margin-left: 1px;
  border: 1px solid #80808a;
  box-sizing: border-box;
  background: #e6e0d4;
}

.disabled-label {
  margin-left: 5px;
  font-size: 11.500px;
  color: #f0f0f6;
  text-shadow: 1px 1px 0 #b0b0bc;
  white-space: nowrap;
}

.main {
  flex: 1;
  min-height: 0;
  display: flex;
}

.viewport {
  position: relative;
  flex: 1;
  min-width: 0;
  overflow: hidden;
  background: #333564;
}

.scene {
  position: absolute;
  left: 0;
  top: 0;
}

.axis-label {
  font: 14px "Liberation Sans", sans-serif;
  fill: #f5e96f;
}

.mini-axis {
  font: 12px "Liberation Sans", sans-serif;
  fill: #f0f0f4;
}

.scale {
  font: 14px "Liberation Sans", sans-serif;
  fill: #e8e8f0;
}

.tree {
  position: relative;
  padding-top: 28px;
  color: #f4f4fa;
  font-size: 13px;
}

.row {
  height: 28.07px;
  line-height: 28.07px;
  white-space: nowrap;
  display: flex;
  align-items: center;
  gap: 2px;
}

.row.spaced {
  letter-spacing: 0.7px;
}

.param {
  flex: none;
  margin-left: -4px;
}

.palette {
  position: absolute;
  display: flex;
  flex-direction: column;
  box-shadow: 4px 4px 14px rgba(20, 20, 50, 0.45);
}

.pal-title {
  position: relative;
  height: 31px;
  flex: none;
  background: #fff;
  padding-left: 8px;
  line-height: 30px;
  font-size: 13px;
  color: #222;
}

.close {
  position: absolute;
  right: 1px;
  top: 7px;
  width: 19px;
  height: 19px;
  background: #cd5347;
  color: #fff;
  font-size: 11px;
  line-height: 17px;
  text-align: center;
}

.pal-body {
  position: relative;
  height: 32px;
  display: flex;
  align-items: center;
  padding-left: 13px;
  background: linear-gradient(#d6d7ea, #d0d2e6 45%, #b8b8ca 82%, #8c8c98);
}

.pal-body .tool {
  width: 28px;
  height: 24px;
}

.pal-body.wide .tool {
  width: 30px;
}

.pal-body.wide {
  height: 34px;
}

.grip {
  position: absolute;
  left: 5px;
  top: 2px;
  width: 2px;
  height: 14px;
  background: #f0f0f8;
  box-shadow: 1px 0 0 #a0a0b0;
}

.narrow {
  left: 262px;
  top: 22px;
  width: 36px;
  height: 101px;
}

.narrow .pal-title {
  height: 30px;
}

.pal-col {
  flex: 1;
  position: relative;
  display: flex;
  flex-direction: column;
  align-items: center;
  gap: 2px;
  padding-top: 14px;
  background: linear-gradient(90deg, #dfe0ee, #d0d2e6 60%, #a8a8b8);
}

.pal-col .tool {
  width: 26px;
}

.pal-col .arrow {
  right: -4px;
  bottom: -6px;
}

.grip-h {
  position: absolute;
  left: 2px;
  top: 4px;
  width: 16px;
  height: 2px;
  background: #f0f0f8;
  box-shadow: 0 1px 0 #a0a0b0;
}

.rightbar {
  width: 21px;
  flex: none;
  overflow: hidden;
  box-sizing: border-box;
  padding: 18px 0 0 9px;
  border-left: 1px solid #f4f4fa;
  background: linear-gradient(90deg, #eeeef6, #d0d2e6 30%);
}

.rtool {
  height: 29px;
  display: flex;
  align-items: center;
}

.rsep {
  position: relative;
  margin-left: -6px;
}

.rsep::after {
  content: "";
  position: absolute;
  left: 0;
  top: 50%;
  width: 30px;
  height: 2px;
  background: #f2f3fa;
  box-shadow: 0 1px 0 #a8a8b8;
}

.strip {
  height: 19px;
  flex: none;
  background: #cdcfe3;
}

.taskbar {
  height: 40px;
  flex: none;
  display: flex;
  align-items: stretch;
  background: #cfe1ea;
  font-size: 12.500px;
  color: #222;
}

.search {
  width: 295px;
  flex: none;
  box-sizing: border-box;
  text-indent: -8px;
  background: #fff;
  font-size: 14px;
  line-height: 42px;
  color: #333;
  border-bottom: 1px solid #d8d8d8;
  overflow: hidden;
  white-space: nowrap;
}

.task {
  position: relative;
  flex: none;
  width: 152px;
  box-sizing: border-box;
  display: flex;
  align-items: center;
  gap: 6px;
  padding-left: 4px;
  white-space: nowrap;
  overflow: hidden;
}

.task.open::after {
  content: "";
  position: absolute;
  left: 0;
  right: 0;
  bottom: 0;
  height: 2px;
  background: #0f7ac4;
}

.task.first {
  margin-left: 8px;
}

.narrow-gap {
  margin-left: 8px;
}

.slot {
  flex: none;
  width: 49px;
  display: flex;
  align-items: center;
  justify-content: center;
}

.slot.lead {
  margin-left: 4px;
}

.ff {
  margin-left: 5px;
  padding-left: 5px;
  gap: 3px;
}

.ff + .slot {
  width: 54px;
}

.catia {
  width: 161px;
  padding-left: 8px;
  background: #eaf3f7;
  gap: 5px;
}

.wechat {
  width: 160px;
  padding-left: 6px;
  gap: 6px;
  background: #fda65c;
}

.wechat::after {
  content: "";
  position: absolute;
  left: 0;
  right: 0;
  bottom: 0;
  height: 2px;
  background: #f5821f;
}

.rec {
  margin-left: 5px;
  padding-left: 6px;
  gap: 3px;
}

.tray {
  flex: 1;
  min-width: 0;
  display: flex;
  align-items: center;
  padding-left: 18px;
}

.tray-slot {
  flex: none;
  width: 24px;
  display: flex;
  justify-content: center;
}

.ime {
  flex: none;
  width: 24px;
  text-align: center;
  font-size: 14px;
  margin-left: -1px;
}

.ime-box {
  flex: none;
  width: 16px;
  height: 16px;
  margin-left: 9px;
  border: 1px solid #222;
  box-sizing: border-box;
  font-size: 12px;
  line-height: 14px;
  text-align: center;
}

.clock {
  flex: none;
  margin-left: 12px;
  display: flex;
  flex-direction: column;
  font-size: 12.500px;
  line-height: 18px;
  white-space: nowrap;
}

.clock span:first-child {
  margin-left: 14px;
}

.note {
  position: absolute;
  left: 0;
  top: 0;
  width: 166px;
  height: 34px;
  background: #fff;
  font-size: 16px;
  line-height: 40px;
  color: #222;
  white-space: nowrap;
}

.note span {
  margin-left: -2px;
  display: inline-block;
}

.caret {
  position: absolute;
  left: 165px;
  top: 10px;
  width: 1px;
  height: 30px;
  background: #111;
}
</style>
